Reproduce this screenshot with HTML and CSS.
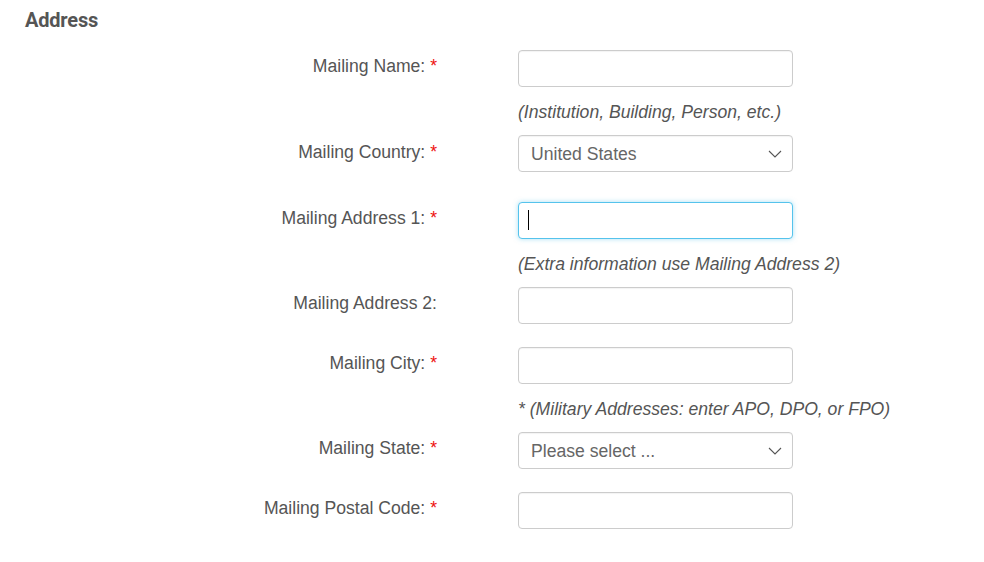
FILE: index.html
```html
<!DOCTYPE html>
<html lang="en">
<head>
<meta charset="utf-8">
<title>Address</title>
<link rel="stylesheet" href="styles.css">
</head>
<body>
<section class="address">
  <h2 class="title">Address</h2>
  <form class="form">
    <div class="group has-hint">
      <label class="label" for="mname">Mailing Name: <span class="req">*</span></label>
      <div class="field">
        <input class="control" id="mname" type="text">
        <div class="hint">(Institution, Building, Person, etc.)</div>
      </div>
    </div>
    <div class="group wide-gap">
      <label class="label label-low" for="mcountry">Mailing Country: <span class="req">*</span></label>
      <div class="field">
        <div class="select-wrap">
          <select class="control select" id="mcountry"><option>United States</option></select>
          <svg class="chev" width="14" height="8" viewBox="0 0 14 8"><path d="M1 1 L7 7 L13 1" fill="none" stroke="#555" stroke-width="1.1"/></svg>
        </div>
      </div>
    </div>
    <div class="group has-hint">
      <label class="label" for="maddr1">Mailing Address 1: <span class="req">*</span></label>
      <div class="field">
        <div class="input-wrap">
          <input class="control focused" id="maddr1" type="text">
          <span class="caret"></span>
        </div>
        <div class="hint">(Extra information use Mailing Address 2)</div>
      </div>
    </div>
    <div class="group">
      <label class="label" for="maddr2">Mailing Address 2:</label>
      <div class="field">
        <input class="control" id="maddr2" type="text">
      </div>
    </div>
    <div class="group has-hint">
      <label class="label" for="mcity">Mailing City: <span class="req">*</span></label>
      <div class="field">
        <input class="control" id="mcity" type="text">
        <div class="hint">* (Military Addresses: enter APO, DPO, or FPO)</div>
      </div>
    </div>
    <div class="group">
      <label class="label" for="mstate">Mailing State: <span class="req">*</span></label>
      <div class="field">
        <div class="select-wrap">
          <select class="control select" id="mstate"><option>Please select ...</option></select>
          <svg class="chev" width="14" height="8" viewBox="0 0 14 8"><path d="M1 1 L7 7 L13 1" fill="none" stroke="#555" stroke-width="1.1"/></svg>
        </div>
      </div>
    </div>
    <div class="group">
      <label class="label" for="mzip">Mailing Postal Code: <span class="req">*</span></label>
      <div class="field">
        <input class="control" id="mzip" type="text">
      </div>
    </div>
  </form>
</section>
</body>
</html>
```
FILE: styles.css
```css
html, body {
  margin: 0;
  padding: 0;
  background: #fff;
}
body {
  font-family: "Liberation Sans", Arial, sans-serif;
  color: #555;
  font-size: 17.6px;
}
.address {
  padding: 8px 0 0 0;
}
.title {
  margin: 0 0 18px 25px;
  font-family: Roboto, "Liberation Sans", sans-serif;
  font-weight: 700;
  font-size: 20px;
  line-height: 24px;
  letter-spacing: -0.2px;
  color: #555;
}
.form {
  display: flex;
  flex-direction: column;
}
.group {
  display: grid;
  grid-template-columns: 437px 275px;
  column-gap: 81px;
  margin-bottom: 23px;
}
.group.has-hint {
  margin-bottom: 13px;
}
.group.wide-gap {
  margin-bottom: 30px;
}
.label {
  text-align: right;
  padding-top: 6px;
  line-height: 21px;
  color: #555;
}
.label-low {
  padding-top: 7px;
}
.req {
  color: #ee1111;
}
.field {
  display: flex;
  flex-direction: column;
}
.control {
  box-sizing: border-box;
  width: 275px;
  height: 37px;
  margin: 0;
  padding: 0 12px;
  border: 1px solid #ccc;
  border-radius: 4px;
  background: #fff;
  font-family: "Liberation Sans", Arial, sans-serif;
  font-size: 17.6px;
  color: #555;
  outline: none;
  box-shadow: inset 0 1px 1px rgba(0,0,0,0.05);
}
.select {
  appearance: none;
  -webkit-appearance: none;
  color: #666;
}
.control.focused {
  border-color: #55c3ec;
  box-shadow: 0 0 5px rgba(85, 195, 236, 0.5);
}
.select-wrap,
.input-wrap {
  position: relative;
  width: 275px;
  height: 37px;
}
.chev {
  position: absolute;
  right: 11px;
  top: 15px;
  pointer-events: none;
}
.caret {
  position: absolute;
  left: 10px;
  top: 8px;
  width: 1px;
  height: 20px;
  background: #000;
}
.hint {
  margin-top: 15px;
  line-height: 20px;
  font-style: italic;
  color: #555;
  white-space: nowrap;
}
```
